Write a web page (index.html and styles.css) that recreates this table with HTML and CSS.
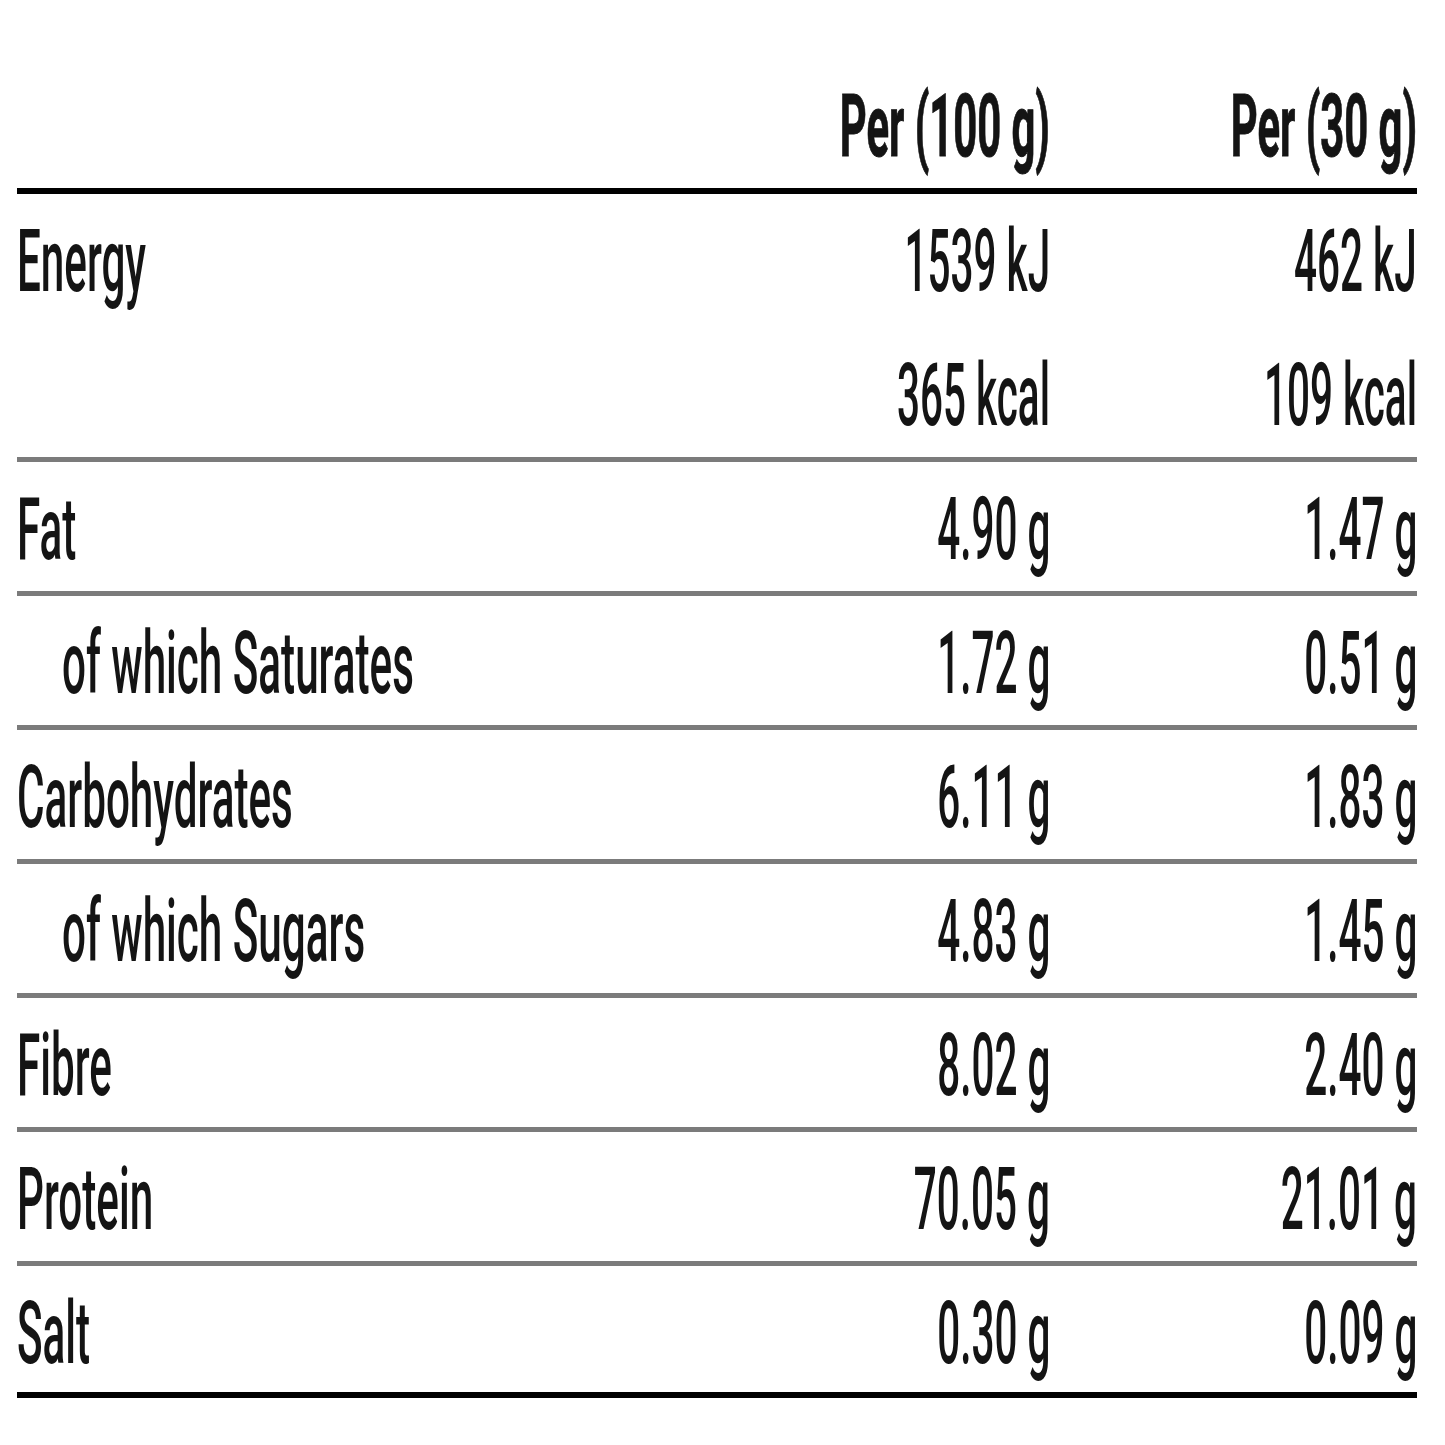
FILE: index.html
```html
<!DOCTYPE html>
<html lang="en">
<head>
<meta charset="utf-8">
<title>Nutrition</title>
<link rel="stylesheet" href="styles.css">
</head>
<body>
<div class="facts">
  <div class="row head">
    <div class="cell label"></div>
    <div class="cell val"><span class="t">Per (100 g)</span></div>
    <div class="cell val"><span class="t">Per (30 g)</span></div>
  </div>
  <div class="row energy">
    <div class="cell label"><span class="t">Energy</span></div>
    <div class="cell val"><span class="t">1539 kJ</span><span class="t">365 kcal</span></div>
    <div class="cell val"><span class="t">462 kJ</span><span class="t">109 kcal</span></div>
  </div>
  <div class="row">
    <div class="cell label"><span class="t">Fat</span></div>
    <div class="cell val"><span class="t">4.90 g</span></div>
    <div class="cell val"><span class="t">1.47 g</span></div>
  </div>
  <div class="row sub">
    <div class="cell label"><span class="t">of which Saturates</span></div>
    <div class="cell val"><span class="t">1.72 g</span></div>
    <div class="cell val"><span class="t">0.51 g</span></div>
  </div>
  <div class="row">
    <div class="cell label"><span class="t">Carbohydrates</span></div>
    <div class="cell val"><span class="t">6.11 g</span></div>
    <div class="cell val"><span class="t">1.83 g</span></div>
  </div>
  <div class="row sub">
    <div class="cell label"><span class="t">of which Sugars</span></div>
    <div class="cell val"><span class="t">4.83 g</span></div>
    <div class="cell val"><span class="t">1.45 g</span></div>
  </div>
  <div class="row">
    <div class="cell label"><span class="t">Fibre</span></div>
    <div class="cell val"><span class="t">8.02 g</span></div>
    <div class="cell val"><span class="t">2.40 g</span></div>
  </div>
  <div class="row">
    <div class="cell label"><span class="t">Protein</span></div>
    <div class="cell val"><span class="t">70.05 g</span></div>
    <div class="cell val"><span class="t">21.01 g</span></div>
  </div>
  <div class="row last">
    <div class="cell label"><span class="t">Salt</span></div>
    <div class="cell val"><span class="t">0.30 g</span></div>
    <div class="cell val"><span class="t">0.09 g</span></div>
  </div>
</div>
</body>
</html>
```
FILE: styles.css
```css
body {
  margin: 0;
  background: #ffffff;
  font-family: Roboto, "Liberation Sans", sans-serif;
  color: #141414;
}

.facts {
  margin-left: 17px;
  width: 1400px;
}

.row {
  display: grid;
  grid-template-columns: minmax(0, 1fr) 300px 367px;
  height: 134px;
  box-sizing: border-box;
  border-bottom: 5px solid #7b7b7b;
  font-size: 87px;
  font-weight: 500;
  line-height: 134px;
  white-space: nowrap;
}

.head {
  height: 194px;
  padding-top: 59px;
  border-bottom: 6px solid #000000;
  font-weight: 700;
}

.energy {
  height: 268px;
}

.last {
  height: 132px;
  border-bottom: 6px solid #000000;
}

.cell {
  min-width: 0;
  display: flex;
  flex-direction: column;
}

.label {
  align-items: flex-start;
}

.sub .label {
  padding-left: 45px;
}

.val {
  align-items: flex-end;
}

.t {
  display: block;
}

.label .t {
  transform: scaleX(0.485);
  transform-origin: left center;
}

.val .t {
  transform: scaleX(0.465);
  transform-origin: right center;
}

.head .val .t {
  transform: scaleX(0.48);
  -webkit-text-stroke: 1px currentColor;
}
```
